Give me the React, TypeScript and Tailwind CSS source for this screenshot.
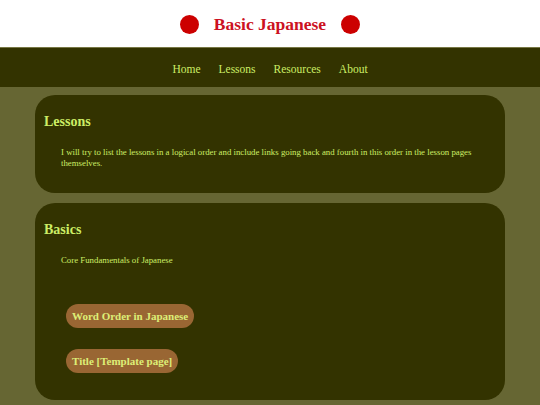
const links = ["Home", "Lessons", "Resources", "About"];

const App = () => {
    return (
        <div className="min-h-[405px] bg-[#666633] font-['Liberation_Serif',serif] text-[#ccee66]">
            <header className="h-[48px] bg-white flex items-center justify-center gap-[13px] border-b border-[#777744] pt-[2px]">
                <span className="w-[19px] h-[19px] rounded-full bg-[#cc0000]" />
                <h1 className="text-[17.5px] font-bold text-[#cc1122] px-[2px]">Basic Japanese</h1>
                <span className="w-[19px] h-[19px] rounded-full bg-[#cc0000]" />
            </header>
            <nav className="h-[39px] bg-[#333300] flex items-center justify-center gap-[18px] text-[11.5px] text-[#ccee66] pt-[4px]">
                {links.map((l) => (
                    <a key={l} className="cursor-pointer">{l}</a>
                ))}
            </nav>
            <main className="flex flex-col gap-[10px] px-[35px] pt-[8px] pb-[5px]">
                <section className="bg-[#333300] rounded-[20px] h-[98px] px-[9px] pt-[18px]">
                    <h2 className="text-[14px] font-bold leading-[18px]">Lessons</h2>
                    <p className="text-[8.8px] leading-[11px] pl-[17px] pr-[12px] mt-[16px]">
                        I will try to list the lessons in a logical order and include links going back and fourth in this order in the lesson pages themselves.
                    </p>
                </section>
                <section className="bg-[#333300] rounded-[20px] h-[197px] px-[9px] pt-[18px]">
                    <h2 className="text-[14px] font-bold leading-[18px]">Basics</h2>
                    <p className="text-[8.8px] leading-[11px] pl-[17px] mt-[16px]">Core Fundamentals of Japanese</p>
                    <div className="flex flex-col items-start gap-[21px] pl-[22px] mt-[38px]">
                        <a className="bg-[#996633] rounded-full h-[24px] px-[6px] flex items-center text-[11px] font-bold text-[#ddee77]">Word Order in Japanese</a>
                        <a className="bg-[#996633] rounded-full h-[24px] px-[6px] flex items-center text-[11px] font-bold text-[#ddee77]">Title [Template page]</a>
                    </div>
                </section>
            </main>
        </div>
    );
};

export default App;
